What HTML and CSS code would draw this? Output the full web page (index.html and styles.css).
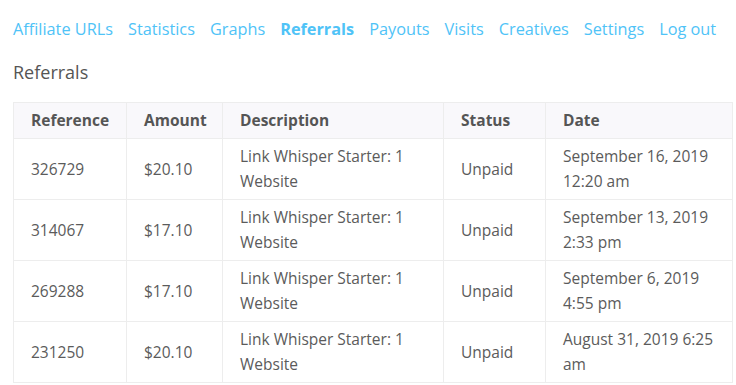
FILE: index.html
```html
<!DOCTYPE html>
<html lang="en">
<head>
<meta charset="utf-8">
<title>Referrals</title>
<link rel="stylesheet" href="styles.css">
</head>
<body>
<div class="page">
  <nav class="tabs">
    <a href="#">Affiliate URLs</a>
    <a href="#">Statistics</a>
    <a href="#">Graphs</a>
    <a href="#" class="active">Referrals</a>
    <a href="#">Payouts</a>
    <a href="#">Visits</a>
    <a href="#">Creatives</a>
    <a href="#">Settings</a>
    <a href="#">Log out</a>
  </nav>
  <h4 class="title">Referrals</h4>
  <table class="referrals">
    <colgroup>
      <col class="c-ref"><col class="c-amt"><col class="c-desc"><col class="c-status"><col class="c-date">
    </colgroup>
    <thead>
      <tr><th>Reference</th><th>Amount</th><th>Description</th><th>Status</th><th>Date</th></tr>
    </thead>
    <tbody>
      <tr><td>326729</td><td>$20.10</td><td>Link Whisper Starter: 1 Website</td><td>Unpaid</td><td>September 16, 2019 12:20 am</td></tr>
      <tr><td>314067</td><td>$17.10</td><td>Link Whisper Starter: 1 Website</td><td>Unpaid</td><td>September 13, 2019 2:33 pm</td></tr>
      <tr><td>269288</td><td>$17.10</td><td>Link Whisper Starter: 1 Website</td><td>Unpaid</td><td>September 6, 2019 4:55 pm</td></tr>
      <tr><td>231250</td><td>$20.10</td><td>Link Whisper Starter: 1 Website</td><td>Unpaid</td><td>August 31, 2019 6:25 am</td></tr>
    </tbody>
  </table>
</div>
</body>
</html>
```
FILE: styles.css
```css
html, body {
  margin: 0;
  padding: 0;
  background: #ffffff;
}
body {
  font-family: "Open Sans", "Noto Sans", sans-serif;
  color: #5b5b5b;
  font-size: 15.5px;
}
.page {
  padding: 17px 0 0 13px;
}
.tabs {
  display: flex;
  gap: 15px;
  line-height: 24px;
  font-size: 16.3px;
}
.tabs a {
  color: #4fc3f7;
  text-decoration: none;
}
.tabs a.active {
  font-weight: 700;
}
.title {
  margin: 19px 0 18px;
  font-size: 18px;
  font-weight: 400;
  line-height: 24px;
  color: #555555;
}
.referrals {
  width: 719px;
  table-layout: fixed;
  border-collapse: collapse;
  border: 1px solid #ededed;
}
.c-ref { width: 113px; }
.c-amt { width: 96px; }
.c-desc { width: 221px; }
.c-status { width: 102px; }
.c-date { width: 187px; }
.referrals th,
.referrals td {
  border: 1px solid #ededed;
  text-align: left;
  padding: 5px 17px;
  vertical-align: middle;
}
.referrals th {
  background: #f9f8fb;
  font-weight: 700;
  color: #555555;
  line-height: 24px;
  padding-top: 5px;
  padding-bottom: 6px;
}
.referrals td {
  line-height: 25px;
}
```
